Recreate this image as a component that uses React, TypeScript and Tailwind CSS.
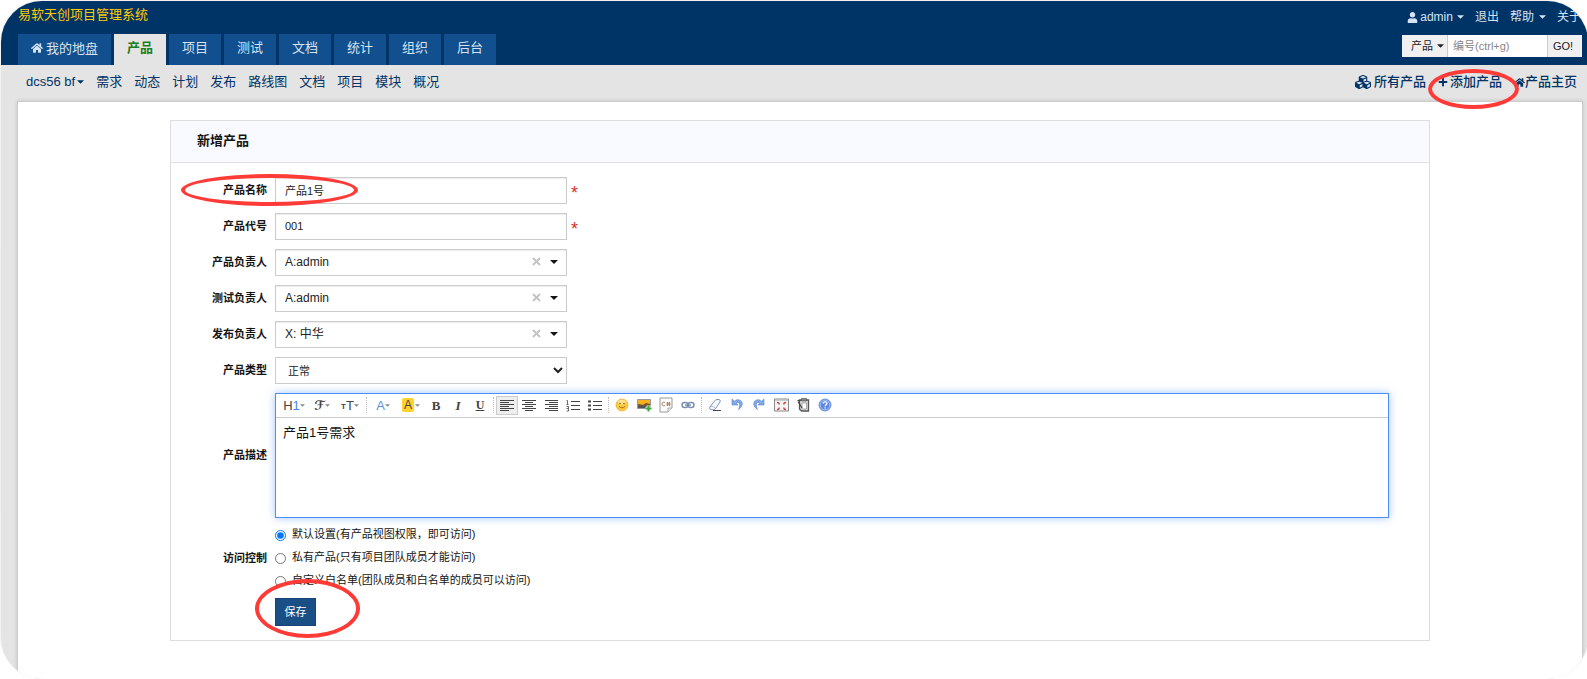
import React from 'react';
import { FaCubes, FaHome, FaPlus, FaUser } from 'react-icons/fa';

const tabs = ['项目', '测试', '文档', '统计', '组织', '后台'];
const subLinks = ['需求', '动态', '计划', '发布', '路线图', '文档', '项目', '模块', '概况'];

const owners = [
  { id: 'po', label: '产品负责人', value: 'A:admin' },
  { id: 'qd', label: '测试负责人', value: 'A:admin' },
  { id: 'rd', label: '发布负责人', value: 'X: 中华' },
];

const accessOptions = [
  { id: 'open', text: '默认设置(有产品视图权限，即可访问)' },
  { id: 'private', text: '私有产品(只有项目团队成员才能访问)' },
  { id: 'custom', text: '自定义白名单(团队成员和白名单的成员可以访问)' },
];

const Caret: React.FC<{ className?: string }> = ({ className = 'w-2 h-1' }) => (
  <svg className={`inline-block ${className}`} viewBox="0 0 8 4" fill="currentColor" aria-hidden="true">
    <path d="M0 0h8L4 4z" />
  </svg>
);

const Field: React.FC<{ label: string; htmlFor?: string; children: React.ReactNode }> = ({ label, htmlFor, children }) => (
  <div className="flex items-center">
    <label htmlFor={htmlFor} className="w-[104px] shrink-0 pr-2 pb-[2px] text-right font-bold">
      {label}
    </label>
    {children}
  </div>
);

const Tool: React.FC<{ title: string; wide?: boolean; active?: boolean; children: React.ReactNode }> = ({
  title,
  wide,
  active,
  children,
}) => (
  <button
    type="button"
    title={title}
    className={`flex h-[19px] items-center justify-center border leading-none text-[#444] ${wide ? 'w-7' : 'w-[22px]'} ${
      active ? 'border-[#ccc] bg-[#eee]' : 'border-transparent'
    }`}
  >
    {children}
    {wide && <Caret className="w-[5px] h-[3px] text-[#888]" />}
  </button>
);

const Divider = () => <span className="mx-[2px] h-4 border-l border-dotted border-[#bbb]"></span>;

const Lines: React.FC<{ d: string; children?: React.ReactNode }> = ({ d, children }) => (
  <svg width="14" height="13" viewBox="0 0 14 13" fill="none" stroke="#444" strokeWidth="1">
    <path d={d} />
    {children}
  </svg>
);

const Toolbar = () => (
  <div className="flex h-6 items-center border-b border-[#ccc] pb-px pl-1">
    <Tool title="段落" wide>
      <span className="text-[13px]">H<span className="text-[#4d86e0]">1</span></span>
    </Tool>
    <Tool title="字体" wide>
      <span className="text-[13px] font-bold font-['DejaVu_Sans',sans-serif]">ℱ</span>
    </Tool>
    <Tool title="文字大小" wide>
      <span className="text-[8px] font-bold pt-1">T</span>
      <span className="text-[13px]">T</span>
    </Tool>
    <Divider />
    <Tool title="文字颜色" wide>
      <span className="text-[13px] text-[#5b8fe8]">A</span>
    </Tool>
    <Tool title="文字背景" wide>
      <span className="mr-px rounded-xs bg-[#ffd22e] px-[2px] text-[12px] leading-[14px]">A</span>
    </Tool>
    <Tool title="粗体">
      <span className="font-['Liberation_Serif',serif] text-[13px] font-bold">B</span>
    </Tool>
    <Tool title="斜体">
      <span className="font-['Liberation_Serif',serif] text-[13px] font-bold italic">I</span>
    </Tool>
    <Tool title="下划线">
      <span className="font-['Liberation_Serif',serif] text-[12px] font-bold underline">U</span>
    </Tool>
    <Divider />
    <Tool title="左对齐" active>
      <Lines d="M0 1.5h14M0 3.5h9M0 5.5h14M0 7.5h9M0 9.5h14M0 11.5h9" />
    </Tool>
    <Tool title="居中">
      <Lines d="M0 1.5h14M3 3.5h8M0 5.5h14M3 7.5h8M0 9.5h14M3 11.5h8" />
    </Tool>
    <Tool title="右对齐">
      <Lines d="M1 1.5h13M5 3.5h9M1 5.5h13M5 7.5h9M1 9.5h13M5 11.5h9" />
    </Tool>
    <Tool title="编号">
      <Lines d="M5 2.5h9M5 6.5h9M5 10.5h9">
        <path d="M.5 1.5h1V5M.5 5.5h2M.5 7.5h2v2h-2M.5 12h2v-2.500" strokeWidth=".8" />
      </Lines>
    </Tool>
    <Tool title="项目符号">
      <Lines d="M5 2.5h9M5 6.5h9M5 10.5h9">
        <path d="M0 2.500h3M0 6.500h3M0 10.500h3" strokeWidth="2" />
      </Lines>
    </Tool>
    <Divider />
    <Tool title="表情">
      <svg width="14" height="14" viewBox="0 0 14 14">
        <circle cx="7" cy="7" r="6" fill="#fbc93d" stroke="#eab040" strokeWidth=".8" />
        <ellipse cx="7" cy="4.200" rx="4" ry="2.500" fill="#fde58c" />
        <circle cx="5" cy="5.500" r=".8" fill="#7a5212" />
        <circle cx="9" cy="5.500" r=".8" fill="#7a5212" />
        <path d="M4 8.300c1.500 2 4.500 2 6 0" fill="none" stroke="#9a6a1a" strokeWidth=".9" />
      </svg>
    </Tool>
    <Tool title="图片">
      <svg width="15" height="14" viewBox="0 0 15 14">
        <path d="M.5 1.500h13v9H.5z" fill="#555" stroke="#999" />
        <path d="M1 2h12v4L9 5 6 7 1 6z" fill="#f5b01f" />
        <path d="M1 6.500l5 .5 3-1.500 4 1v1H1z" fill="#8a5a12" />
        <path d="M11.500 7.500v6M8.500 10.500h6" stroke="#fff" strokeWidth="3.500" />
        <path d="M11.500 7.500v6M8.500 10.500h6" stroke="#3fa63f" strokeWidth="2" />
      </svg>
    </Tool>
    <Tool title="插入代码">
      <svg width="14" height="16" viewBox="0 0 14 16">
        <path d="M1 1h12v10l-4 4H1z" fill="#fcfcfc" stroke="#999" />
        <path d="M13 11H9v4" fill="#eee" stroke="#aaa" />
        <path d="M6 5.600c-1-1-3-.6-3 1.400s2 2.400 3 1.400M8.500 5v4M10.500 5v4M7.500 6.200h4M7.500 7.800h4" fill="none" stroke="#b0835a" />
      </svg>
    </Tool>
    <Tool title="超级链接">
      <svg width="14" height="8" viewBox="0 0 14 8" fill="none" stroke="#7c91b0" strokeWidth="1.500">
        <rect x="1" y="1.500" width="6" height="5" rx="2.500" />
        <rect x="7" y="1.500" width="6" height="5" rx="2.500" />
        <path d="M4 4h6" />
      </svg>
    </Tool>
    <Divider />
    <Tool title="删除格式">
      <svg width="14" height="14" viewBox="0 0 14 14">
        <path d="M6.500 3Q7.500 1.500 9 1.500h2q2 .5 1 2.500L8 10q-1 1.700-2.500 1.700H3Q.8 11 1.800 9z" fill="#f4f8fd" stroke="#7f95b5" />
        <path d="M2 8.500q3-1 5.500 2" fill="none" stroke="#9fb2cc" strokeWidth=".8" />
        <path d="M5 12.500h8" stroke="#444" />
      </svg>
    </Tool>
    <Tool title="后退">
      <svg width="12" height="14" viewBox="0 0 12 14">
        <path d="M1 1v6h6L5 5c3-2 5 1 2.500 6.500 4-2.500 5-7 2-9-2-1.300-4.500-1-6.300.8z" fill="#82aae8" stroke="#5580cc" strokeWidth=".6" />
      </svg>
    </Tool>
    <Tool title="前进">
      <svg width="12" height="14" viewBox="0 0 12 14">
        <path d="M11 1v6H5l2-2c-3-2-5 1-2.500 6.500-4-2.500-5-7-2-9 2-1.300 4.500-1 6.300.8z" fill="#82aae8" stroke="#5580cc" strokeWidth=".6" />
      </svg>
    </Tool>
    <Tool title="全屏显示">
      <svg width="15" height="14" viewBox="0 0 15 14">
        <path d="M.5 1h14v12H.5z" fill="#f5f5f5" stroke="#888" />
        <path d="M1 2.500h13" stroke="#ccc" />
        <path d="M3 4.500q2.500 0 2 2M12 4.500q-2.500 0-2 2M3 11.500q2.500 0 2-2M12 11.500q-2.500 0-2-2" fill="none" stroke="#d23c3c" strokeWidth="1.500" />
      </svg>
    </Tool>
    <Tool title="粘贴">
      <svg width="13" height="14" viewBox="0 0 13 14">
        <path d="M2.500 2h9v11h-7l-2-2z" fill="#ddd" stroke="#555" strokeWidth="1.300" />
        <path d="M4.500.5h5v2.500h-5z" fill="#888" stroke="#555" strokeWidth=".7" />
        <path d="M5 5h4.500v6H5z" fill="#fff" stroke="#888" strokeWidth=".7" />
        <path d="M1 3.500l4 6.500M.5 2.500h3" stroke="#444" strokeWidth="1.200" />
      </svg>
    </Tool>
    <Tool title="帮助">
      <svg width="14" height="14" viewBox="0 0 14 14">
        <circle cx="7" cy="7" r="6" fill="#5b87e0" stroke="#7396dc" />
        <circle cx="7" cy="7" r="4.800" fill="none" stroke="#b7cdf6" strokeWidth=".8" />
        <path d="M5.200 5.500c0-2.200 3.800-2.200 3.800 0 0 1.300-1.900 1.400-1.900 2.800M7.100 9.300v1.300" fill="none" stroke="#fff" strokeWidth="1.300" />
      </svg>
    </Tool>
  </div>
);

const App: React.FC = () => {
  const inputClass = 'h-[27px] w-[292px] border border-[#ccc] bg-white pl-[9px] pb-[2px] text-[#222] shadow-[inset_0_1px_1px_rgba(0,0,0,0.08)]';

  return (
    <div className="overflow-hidden bg-white text-[11px] leading-4 text-[#141414] font-['Liberation_Sans','Noto_Sans_CJK_SC',sans-serif]">
      <div className="-mr-[2px] flex min-h-screen flex-col overflow-hidden rounded-[42px] border border-b-0 border-white/50 bg-[#e4e4e4]">
        {/* Header */}
        <header className="flex justify-between bg-[#003366] pl-[17px] pr-[6px] text-[#d6e4f2]">
          <div>
            <h1 className="h-[33px] pt-1 text-[13px] leading-5 text-[#ffcc00]">易软天创项目管理系统</h1>
            <nav className="flex gap-[3px] text-[13px] leading-[27px]">
              <a href="#my" className="flex h-[31px] items-center gap-[3px] bg-[#114f8e] px-[13px] pb-[3px]">
                <FaHome size={12} />
                我的地盘
              </a>
              <a href="#product" className="h-[31px] bg-[#e4e4e4] px-[13px] font-bold text-[#1b7f1b]">产品</a>
              {tabs.map((tab) => (
                <a key={tab} href="#tab" className="h-[31px] bg-[#114f8e] px-[13px]">{tab}</a>
              ))}
            </nav>
          </div>

          <div className="flex flex-col items-end">
            <div className="flex h-[34px] items-center gap-[11px] pr-px pb-[2px] text-[12px]">
              <a href="#admin" className="flex items-center gap-[2px]">
                <FaUser size={11} />
                admin
                <Caret className="ml-[2px] h-1 w-[7px]" />
              </a>
              <a href="#logout">退出</a>
              <a href="#help" className="flex items-center gap-[5px]">
                帮助
                <Caret className="h-1 w-[7px]" />
              </a>
              <a href="#about">关于</a>
            </div>
            <form className="flex h-[22px] text-[#222]" onSubmit={(e) => e.preventDefault()}>
              <button type="button" className="flex w-[45px] items-center justify-center gap-1 bg-[#f0f0f0] pl-[6px]">
                产品
                <Caret className="h-1 w-[7px]" />
              </button>
              <input
                type="text"
                aria-label="编号"
                placeholder="编号(ctrl+g)"
                className="w-[101px] border-x border-[#ccc] bg-white px-[5px] placeholder:text-[#888]"
              />
              <button type="submit" className="w-[34px] bg-[#f0f0f0] pr-1">GO!</button>
            </form>
          </div>
        </header>

        {/* Module menu */}
        <div className="flex h-9 items-center justify-between pl-[25px] pr-[11px] pb-[2px] text-[13px] text-[#003366]">
          <nav className="flex items-center gap-3">
            <a href="#dcs56" className="flex items-center gap-[2px]">
              dcs56 bf
              <Caret className="h-1 w-[7px]" />
            </a>
            {subLinks.map((link) => (
              <a key={link} href="#sub">{link}</a>
            ))}
          </nav>
          <div className="flex items-center gap-3 font-medium">
            <a href="#all" className="flex items-center gap-[3px]">
              <FaCubes size={16} />
              所有产品
            </a>
            <a href="#create" className="relative flex items-center gap-[2px]">
              <FaPlus size={10} />
              添加产品
              <span className="pointer-events-none absolute -left-[10px] -top-[5px] h-10 w-[91px] rounded-[50%] border-4 border-[#ff3b38]"></span>
            </a>
            <a href="#home" className="flex items-center">
              <FaHome size={11} />
              产品主页
            </a>
          </div>
        </div>

        <main className="ml-4 mr-[5px] flex-1 border border-b-0 border-[#ccc] bg-white pt-[18px] shadow-[0_0_4px_rgba(0,0,0,0.15)]">
          <div className="mx-auto max-w-[1260px] border border-[#ddd]">
            <h2 className="border-b border-[#e2e2e2] bg-[#f8faff] px-[26px] pb-[2px] text-[13px] leading-[39px] font-bold">新增产品</h2>

            <form className="flex flex-col gap-[9px] pt-[14px] pr-10 pb-[14px]" onSubmit={(e) => e.preventDefault()}>
              <div className="relative">
                <Field label="产品名称" htmlFor="name">
                  <input id="name" type="text" defaultValue="产品1号" className={inputClass} />
                  <span className="pl-1 pt-1 text-[18px] text-[#d9302c]">*</span>
                </Field>
                <span className="pointer-events-none absolute -top-[3px] left-[10px] h-8 w-[177px] rounded-[50%] border-4 border-[#ff3b38]"></span>
              </div>
              <Field label="产品代号" htmlFor="code">
                <input id="code" type="text" defaultValue="001" className={inputClass} />
                <span className="pl-1 pt-1 text-[18px] text-[#d9302c]">*</span>
              </Field>

              {owners.map((owner) => (
                <Field key={owner.id} label={owner.label} htmlFor={owner.id}>
                  <div className="relative">
                    <select id={owner.id} className={`${inputClass} appearance-none text-[12px]`}>
                      <option>{owner.value}</option>
                    </select>
                    <button type="button" aria-label="清除" className="absolute right-[26px] top-2 text-[#c4c4c4]">
                      <svg width="9" height="9" viewBox="0 0 9 9" fill="none" stroke="currentColor" strokeWidth="2">
                        <path d="M1 1l7 7M8 1L1 8" />
                      </svg>
                    </button>
                    <Caret className="pointer-events-none absolute right-[9px] top-[11px] h-1 w-2" />
                  </div>
                </Field>
              ))}

              <Field label="产品类型" htmlFor="type">
                <select id="type" className="h-[27px] w-[292px] border border-[#ccc] bg-white pl-2 text-[#222]">
                  <option>正常</option>
                </select>
              </Field>

              <Field label="产品描述" htmlFor="desc">
                <div className="flex-1 border border-[#4c8dfc] shadow-[0_0_8px_rgba(76,141,252,0.5)]">
                  <Toolbar />
                  <textarea
                    id="desc"
                    defaultValue="产品1号需求"
                    className="block h-[99px] w-full resize-none px-[7px] py-[5px] text-[13px] leading-5 outline-none"
                  />
                </div>
              </Field>

              <div role="radiogroup" aria-labelledby="acl" className="flex items-center">
                <span id="acl" className="w-[104px] shrink-0 pr-2 text-right font-bold">访问控制</span>
                <div className="flex flex-col gap-[7px]">
                  {accessOptions.map((option, i) => (
                    <label key={option.id} className="flex items-center gap-[6px]">
                      <input type="radio" name="acl" defaultChecked={i === 0} className="size-[11px]" />
                      <span className="pb-px leading-[15px]">{option.text}</span>
                    </label>
                  ))}
                </div>
              </div>

              <div className="relative ml-[104px] self-start">
                <button type="submit" className="h-7 w-[41px] border border-[#164477] bg-[#1a4f85] text-white">保存</button>
                <span className="pointer-events-none absolute -left-5 -top-[19px] h-[59px] w-[105px] rounded-[50%] border-4 border-[#ff3b38]"></span>
              </div>
            </form>
          </div>
        </main>
      </div>
    </div>
  );
};

export default App;
